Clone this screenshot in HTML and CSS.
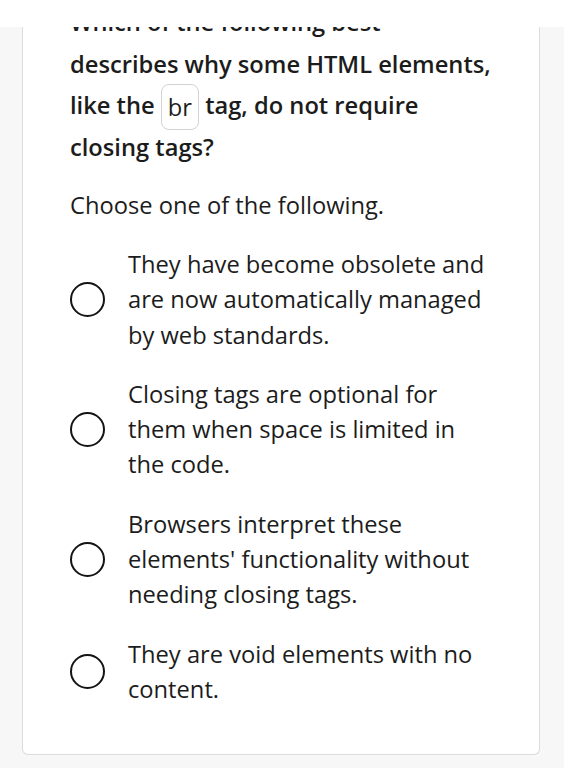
FILE: index.html
```html
<!DOCTYPE html>
<html>
<head>
<meta charset="utf-8">
<link rel="stylesheet" href="styles.css">
</head>
<body>
<header class="topbar"></header>
<main class="card">
  <p class="question">Which of the following best describes why some HTML elements, like the <code class="code">br</code> tag, do not require closing tags?</p>
  <p class="prompt">Choose one of the following.</p>
  <ul class="options">
    <li class="option"><span class="radio"></span><span class="label">They have become obsolete and are now automatically managed by web standards.</span></li>
    <li class="option"><span class="radio"></span><span class="label">Closing tags are optional for them when space is limited in the code.</span></li>
    <li class="option"><span class="radio"></span><span class="label">Browsers interpret these elements' functionality without needing closing tags.</span></li>
    <li class="option"><span class="radio"></span><span class="label">They are void elements with no content.</span></li>
  </ul>
</main>
</body>
</html>
```
FILE: styles.css
```css
html, body {
  margin: 0;
  padding: 0;
  background: #f7f7f7;
  font-family: "Open Sans", "Noto Sans", sans-serif;
  color: #1c1c1c;
}
.topbar {
  position: fixed;
  top: 0;
  left: 0;
  right: 0;
  height: 27px;
  background: #fff;
  z-index: 2;
}
.card {
  margin: 0 24px 0 22px;
  background: #fff;
  border: 1px solid #dcdcdc;
  border-top: none;
  border-radius: 0 0 6px 6px;
  padding: 2px 47px 47px 47px;
}
.question {
  margin: 0;
  font-size: 23.7px;
  font-weight: 600;
  line-height: 41.5px;
}
.code {
  display: inline-block;
  font-family: "Open Sans", sans-serif;
  font-weight: 400;
  font-size: 23.7px;
  line-height: 34px;
  border: 1px solid #d2d2d2;
  border-radius: 8px;
  padding: 5px 6px;
  vertical-align: middle;
  margin: -6px 0 -4px;
}
.prompt {
  margin: 20px 0 0;
  font-size: 23.7px;
  line-height: 35px;
}
.options {
  list-style: none;
  margin: 24px 0 0;
  padding: 0;
  display: flex;
  flex-direction: column;
  gap: 24px;
}
.option {
  display: flex;
  align-items: center;
  gap: 23px;
}
.radio {
  flex: none;
  width: 31px;
  height: 31px;
  border: 2.6px solid #141414;
  border-radius: 50%;
}
.label {
  font-size: 23.7px;
  line-height: 35.3px;
}
```
